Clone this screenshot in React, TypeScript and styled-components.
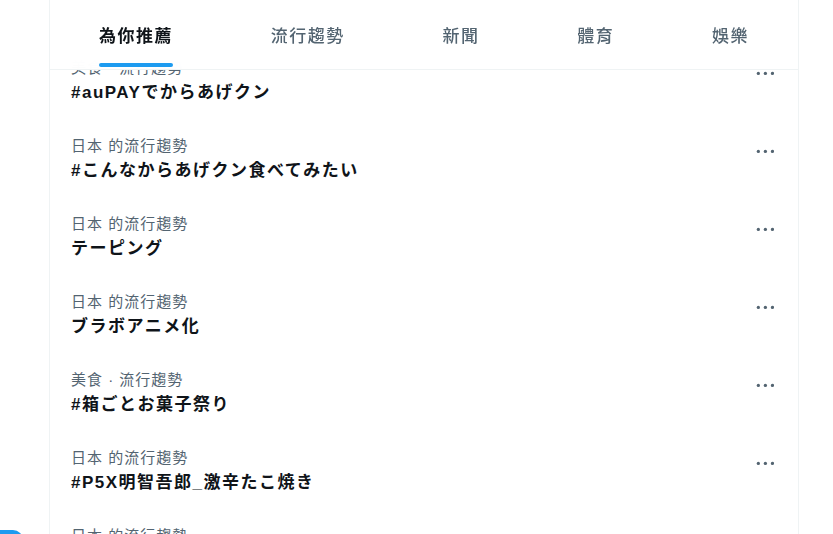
import React from 'react'
import styled, { createGlobalStyle } from 'styled-components'

const GlobalStyle = createGlobalStyle`
  html, body {
    margin: 0;
    padding: 0;
    background: #ffffff;
    overflow: hidden;
  }
  body {
    font-family: 'Liberation Sans', 'Noto Sans CJK JP', 'Noto Sans CJK TC', sans-serif;
  }
`

const trends = [
  { label: '美食 · 流行趨勢', title: '#auPAYでからあげクン' },
  { label: '日本 的流行趨勢', title: '#こんなからあげクン食べてみたい' },
  { label: '日本 的流行趨勢', title: 'テーピング' },
  { label: '日本 的流行趨勢', title: 'ブラボアニメ化' },
  { label: '美食 · 流行趨勢', title: '#箱ごとお菓子祭り' },
  { label: '日本 的流行趨勢', title: '#P5X明智吾郎_激辛たこ焼き' },
  { label: '日本 的流行趨勢', title: '#ヴァンガード' }
]

const tabs = ['為你推薦', '流行趨勢', '新聞', '體育', '娛樂']

const Page = styled.div`
  display: flex;
  width: 833px;
  height: 534px;
  overflow: hidden;
`

const Sidebar = styled.div`
  width: 49px;
  flex-shrink: 0;
  padding-top: 530px;
  box-sizing: border-box;
`

const PostPill = styled.div`
  width: 42px;
  height: 44px;
  margin-left: -19px;
  border-radius: 10px;
  background: #1d9bf0;
`

const Main = styled.main`
  position: relative;
  width: 750px;
  flex-shrink: 0;
  box-sizing: border-box;
  border-left: 1px solid #eff3f4;
  border-right: 1px solid #eff3f4;
`

const Header = styled.nav`
  position: absolute;
  top: 0;
  left: 0;
  right: 0;
  z-index: 2;
  display: flex;
  height: 69px;
  border-bottom: 1px solid #eff3f4;
  background: rgba(255, 255, 255, 0.97);
  backdrop-filter: blur(12px);
`

const Tab = styled.div`
  flex: 1 1 auto;
  display: flex;
  justify-content: center;
  padding: 0 16px;
`

const TabLabel = styled.div<{ $active?: boolean }>`
  position: relative;
  display: flex;
  align-items: center;
  height: 100%;
  font-family: 'Liberation Sans', 'Noto Sans CJK TC', sans-serif;
  font-size: 17px;
  letter-spacing: 1.5px;
  font-weight: ${({ $active }) => ($active ? 700 : 500)};
  color: ${({ $active }) => ($active ? '#0f1419' : '#536471')};
`

const Indicator = styled.div`
  position: absolute;
  left: 0;
  right: 0;
  bottom: 2px;
  height: 4px;
  border-radius: 9999px;
  background: #1d9bf0;
`

const List = styled.section`
  padding-top: 46px;
`

const Row = styled.div`
  display: flex;
  align-items: flex-start;
  padding: 12px 16px 18px 21px;
`

const RowText = styled.div`
  flex: 1;
  display: flex;
  flex-direction: column;
  min-width: 0;
`

const Label = styled.div`
  font-family: 'Liberation Sans', 'Noto Sans CJK TC', sans-serif;
  font-size: 15px;
  line-height: 20px;
  letter-spacing: 1px;
  color: #536471;
  white-space: nowrap;
`

const Title = styled.div`
  margin-top: 2px;
  font-family: 'Liberation Sans', 'Noto Sans CJK JP', sans-serif;
  font-size: 17px;
  line-height: 26px;
  letter-spacing: 1.5px;
  font-weight: 700;
  color: #0f1419;
  white-space: nowrap;
`

const MoreButton = styled.div`
  display: flex;
  align-items: center;
  justify-content: center;
  width: 34px;
  height: 34px;
  margin-top: -2px;
  flex-shrink: 0;
  color: #536471;
`

const MoreIcon = () => (
  <svg width="18.75" height="18.75" viewBox="0 0 24 24" fill="currentColor">
    <circle cx="3" cy="12" r="2.1" />
    <circle cx="12" cy="12" r="2.1" />
    <circle cx="21" cy="12" r="2.1" />
  </svg>
)

const Rest = styled.div`
  flex: 1;
`

export default function App() {
  return (
    <Page>
      <GlobalStyle />
      <Sidebar>
        <PostPill />
      </Sidebar>
      <Main>
        <Header>
          {tabs.map((t, i) => (
            <Tab key={t}>
              <TabLabel $active={i === 0}>
                {t}
                {i === 0 && <Indicator />}
              </TabLabel>
            </Tab>
          ))}
        </Header>
        <List>
          {trends.map((t, i) => (
            <Row key={i}>
              <RowText>
                <Label>{t.label}</Label>
                <Title>{t.title}</Title>
              </RowText>
              <MoreButton>
                <MoreIcon />
              </MoreButton>
            </Row>
          ))}
        </List>
      </Main>
      <Rest />
    </Page>
  )
}
